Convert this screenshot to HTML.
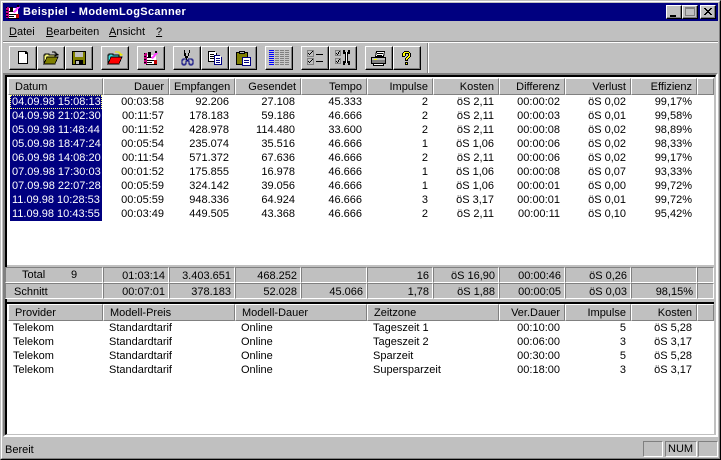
<!DOCTYPE html>
<html><head><meta charset="utf-8"><style>
html,body{margin:0;padding:0;background:#c0c0c0}
body{width:721px;height:460px;position:relative;overflow:hidden;font:11px/14px "Liberation Sans",sans-serif;color:#000}
div,span,svg{position:absolute;box-sizing:border-box}
.b{top:46px;width:28px;height:24px;background:#c0c0c0;border:1px solid;border-color:#fff #000 #000 #fff;box-shadow:inset -1px -1px 0 #808080}
.b svg{left:5px;top:3px}
.m{top:25px;height:14px;white-space:pre}
.m u{text-decoration:underline}
.h{height:17px;background:#c0c0c0;border:1px solid;border-color:#fff #808080 #808080 #fff;line-height:16px;padding:0 4px;white-space:nowrap;text-align:right}
.l{text-align:left}
.r{height:14px;left:0;width:721px}
.r span{top:0;height:14px;text-align:right;white-space:nowrap}
.a{left:103px;width:61px}.c{left:169px;width:60px}.d{left:235px;width:60px}.e{left:301px;width:61px}.f{left:367px;width:61px}.g{left:433px;width:61px}.i{left:499px;width:61px}.j{left:565px;width:61px}.k{left:631px;width:61px}
.s{left:10px;width:92px;background:#000080;color:#fff;padding-left:2px;text-align:left!important}
.t{height:16px;background:#c0c0c0;border:1px solid;border-color:#808080 #fff #fff #808080;line-height:16px;padding:0 3px 0 0;text-align:right;white-space:nowrap}
.p{top:0;text-align:left!important}
.q{left:13px}.u{left:109px}.v{left:241px}.w{left:373px}
.x{left:499px;width:61px}.y{left:565px;width:61px}.z{left:631px;width:61px}
.st{top:441px;height:16px;border:1px solid;border-color:#808080 #fff #fff #808080;line-height:15px}
.cb{top:6px;width:16px;height:14px;background:#c0c0c0;border:1px solid;border-color:#fff #000 #000 #fff;box-shadow:inset -1px -1px 0 #808080}
</style></head><body>

<!-- window frame -->
<div style="left:0;top:0;width:721px;height:460px;border:1px solid;border-color:#c0c0c0 #000 #000 #c0c0c0"></div>
<div style="left:1px;top:1px;width:719px;height:458px;border:1px solid;border-color:#fff #808080 #808080 #fff"></div>

<!-- title bar -->
<div style="left:3px;top:3px;width:715px;height:18px;background:#000080"></div>
<svg style="left:5px;top:4px" width="16" height="16" viewBox="0 0 16 16" shape-rendering="crispEdges">
<rect x="2" y="4" width="11" height="10" fill="#fff"/><rect x="1" y="3" width="3" height="11" fill="#c0007f"/><path d="M1 3h1v1H1zM1 6h2v1H1zM1 9h2v1H1zM1 12h2v1H1z" fill="#000"/>
<path d="M4 7h7v1H4zM4 10h8v1H4zM4 12h5v1H4zM3 14h11v1H3z" fill="#000"/><rect x="5" y="3" width="3" height="4" fill="#000"/><path d="M8 8l5-6 2 1-5 6z" fill="#ff40ff"/><path d="M12 1h2v2h-2z" fill="#000"/><rect x="11" y="10" width="3" height="4" fill="#c00000"/></svg>
<div style="left:23px;top:4px;height:16px;line-height:16px;color:#fff;font-weight:bold;white-space:pre;font-size:11px;letter-spacing:.35px">Beispiel - ModemLogScanner</div>
<div class="cb" style="left:666px;top:5px"><div style="left:3px;top:9px;width:6px;height:2px;background:#000"></div></div>
<div class="cb" style="left:682px;top:5px"><div style="left:2px;top:1px;width:10px;height:9px;border:1px solid #808080;border-top-width:2px"></div></div>
<div class="cb" style="left:700px;top:5px"><svg style="left:3px;top:2px" width="8" height="8" viewBox="0 0 8 8" shape-rendering="crispEdges"><path d="M0 0h2v1h1v1h2V1h1V0h2v1H7v1H6v1H5v1h1v1h1v1h1v1H6V6H5V5H3v1H2v1H0V6h1V5h1V4h1V3H2V2H1V1H0z" fill="#000"/></svg></div>

<!-- menu -->
<div class="m" style="left:9px"><u>D</u>atei</div>
<div class="m" style="left:46px"><u>B</u>earbeiten</div>
<div class="m" style="left:109px"><u>A</u>nsicht</div>
<div class="m" style="left:156px"><u>?</u></div>
<div style="left:3px;top:41px;width:715px;height:1px;background:#808080"></div>
<div style="left:3px;top:42px;width:715px;height:1px;background:#fff"></div>

<!-- toolbar -->
<div class="b" style="left:9px"><svg width="16" height="16" viewBox="0 0 16 16" shape-rendering="crispEdges"><path d="M3 1h8l2 2v11H3z" fill="#000"/><path d="M4 2h6v2h2v9H4z" fill="#fff"/></svg></div>
<div class="b" style="left:37px"><svg width="16" height="16" viewBox="0 0 16 16" shape-rendering="crispEdges"><path d="M1 14V5h1V4h4v1h6v2H5L1 14z" fill="#ffff80" stroke="#000" stroke-width=".8"/><path d="M1 14l3-7h11l-3 7z" fill="#808000" stroke="#000" stroke-width=".8"/><path d="M9 2h3v1h1v1h1v1h1v-1M13 3v3" stroke="#000" stroke-width="1" fill="none"/></svg></div>
<div class="b" style="left:65px"><svg width="16" height="16" viewBox="0 0 16 16" shape-rendering="crispEdges"><rect x="1" y="1" width="14" height="14" fill="#000"/><rect x="2" y="2" width="12" height="12" fill="#808000"/><rect x="4" y="2" width="8" height="5" fill="#c0c0c0"/><rect x="4" y="10" width="8" height="5" fill="#000"/><rect x="5" y="11" width="3" height="3" fill="#c0c0c0"/></svg></div>
<div class="b" style="left:101px"><svg width="16" height="16" viewBox="0 0 16 16" shape-rendering="crispEdges"><path d="M1 14V5h1V4h4v1h6v2H5L1 14z" fill="#40e0e0" stroke="#000" stroke-width=".8"/><path d="M1 14l3-7h11l-3 7z" fill="#ff0000" stroke="#000" stroke-width=".8"/><path d="M8 2h4v1h1v1h1v1h1V4M13 3v3" stroke="#e8e800" stroke-width="1" fill="none"/></svg></div>
<div class="b" style="left:137px"><svg width="16" height="16" viewBox="0 0 16 16" shape-rendering="crispEdges"><rect x="2" y="5" width="11" height="9" fill="#fff"/><rect x="1" y="3" width="3" height="11" fill="#c0007f"/><path d="M1 3h1v1H1zM1 6h2v1H1zM1 9h2v1H1zM1 12h2v1H1z" fill="#000"/><path d="M4 7h7v1H4zM4 10h8v1H4zM4 12h5v1H4zM3 14h11v1H3z" fill="#000"/><rect x="5" y="2" width="3" height="5" fill="#000"/><path d="M8 8l5-6 2 1-5 6z" fill="#ff40ff"/><path d="M12 1h2v2h-2z" fill="#000"/><rect x="11" y="10" width="3" height="4" fill="#c00000"/></svg></div>
<div class="b" style="left:173px"><svg width="16" height="16" viewBox="0 0 16 16" shape-rendering="crispEdges"><path d="M5 0h1v3h1v3h2V3h1V0h1v3h-1v3h-1v2h-1v2H7V8H6V6H5V3z" fill="#000"/><path d="M7 9H4v1H3v4h1v1h2v-1h1v-3h1v-1h1v1h1v3h1v1h2v-1h1v-4h-1V9H9" fill="none" stroke="#000080"/></svg></div>
<div class="b" style="left:201px"><svg width="16" height="16" viewBox="0 0 16 16" shape-rendering="crispEdges"><path d="M1 1h7v1h1v1h1v9H1z" fill="#000"/><rect x="2" y="2" width="7" height="9" fill="#fff"/><path d="M3 4h4v1H3zM3 6h4v1H3zM3 8h4v1H3z" fill="#000"/><path d="M7 5h6v1h1v1h1v8H7z" fill="#000080"/><rect x="8" y="6" width="6" height="8" fill="#fff"/><path d="M9 8h4v1H9zM9 10h4v1H9zM9 12h4v1H9z" fill="#000080"/></svg></div>
<div class="b" style="left:229px"><svg width="16" height="16" viewBox="0 0 16 16" shape-rendering="crispEdges"><rect x="1" y="2" width="12" height="13" fill="#000"/><rect x="2" y="3" width="10" height="11" fill="#808000"/><rect x="4" y="1" width="6" height="3" fill="#000"/><rect x="5" y="2" width="4" height="1" fill="#c0c0c0"/><rect x="7" y="7" width="9" height="9" fill="#000080"/><rect x="8" y="8" width="7" height="7" fill="#fff"/><path d="M9 10h5v1H9zM9 12h5v1H9z" fill="#000080"/></svg></div>
<div class="b" style="left:265px;background:#c8c8c8"><svg style="left:3px;top:3px" width="20" height="17" viewBox="0 0 20 17" shape-rendering="crispEdges"><path d="M0 0h5v1H0zM0 2h5v1H0zM0 4h5v1H0zM0 6h5v1H0zM0 8h5v1H0zM0 10h5v1H0zM0 12h5v1H0zM0 14h5v1H0z" fill="#0000ff"/><path d="M6 0h14v1H6zM6 2h14v1H6zM6 4h14v1H6zM6 6h14v1H6zM6 8h14v1H6zM6 10h14v1H6zM6 12h14v1H6zM6 14h14v1H6z" fill="#808080"/><path d="M10 0h1v16h-1zM15 0h1v16h-1z" fill="#c8c8c8"/></svg></div>
<div class="b" style="left:301px"><svg width="17" height="16" viewBox="0 0 17 16" shape-rendering="crispEdges"><path d="M0 0h7v7H0zM0 8h7v7H0z" fill="#808080"/><path d="M1 1h5v5H1zM1 9h5v5H1z" fill="#c0c0c0"/><path d="M1 3h1v1h1V3h1V2h1V1h1v1H5v1H4v1H3v1H2V4H1zM1 11h1v1h1v-1h1v-1h1V9h1v1H5v1H4v1H3v1H2v-1H1z" fill="#000"/><path d="M9 4h7v1H9zM9 11h7v1H9z" fill="#000"/></svg></div>
<div class="b" style="left:329px"><svg width="17" height="16" viewBox="0 0 17 16" shape-rendering="crispEdges"><path d="M0 0h6v6H0zM0 8h6v6H0z" fill="#808080"/><path d="M1 1h4v4H1zM1 9h4v4H1z" fill="#c0c0c0"/><path d="M1 3h1v1h1V2h1V1h1v1H4v2H3v1H2V4H1zM1 11h1v1h1v-2h1V9h1v1H4v2H3v1H2v-1H1z" fill="#000"/><path d="M8 0h2v2h3V0h2v4h-2v7h2v4h-2v-2h-3v2H8v-4h2V4H8z" fill="#000"/><path d="M11 2h1v11h-1zM9 1h0M9 12h0" fill="#fff"/></svg></div>
<div class="b" style="left:365px"><svg width="16" height="16" viewBox="0 0 16 16" shape-rendering="crispEdges"><path d="M5 1h9l-1 6H4z" fill="#000"/><path d="M6 2h7l-1 4H5z" fill="#fff"/><path d="M6 3h6v1H6zM6 5h5v1H6z" fill="#000"/><rect x="0" y="7" width="15" height="7" fill="#000"/><rect x="1" y="8" width="13" height="2" fill="#c0c0c0"/><rect x="1" y="10" width="13" height="3" fill="#808080"/><rect x="3" y="9" width="3" height="1" fill="#ffff00"/><rect x="2" y="14" width="11" height="2" fill="#000"/><rect x="3" y="14" width="9" height="1" fill="#fff"/></svg></div>
<div class="b" style="left:393px"><svg width="16" height="16" viewBox="0 0 16 16" shape-rendering="crispEdges"><path d="M3 3h1V2h1V1h5v1h1v1h1v4h-1v1h-1v1H9v2H6V8h1V7h1V6h1V4H7v2H6v1H3zM6 12h3v3H6z" fill="#000"/><path d="M4 3h1V2h5v1h1v4h-1v1H9v1H8v1H7V8h1V7h1V6h1V3H6v3H4zM7 13h1v1H7z" fill="#ffff00"/></svg></div>
<div style="left:427px;top:43px;width:1px;height:30px;background:#808080"></div>
<div style="left:428px;top:43px;width:1px;height:30px;background:#fff"></div>

<!-- main sunken frame -->
<div style="left:3px;top:73px;width:715px;height:364px;border:2px solid;border-color:#808080 #fff #fff #808080"></div>
<div style="left:5px;top:75px;width:711px;height:360px;border-style:solid;border-color:#000 #c0c0c0 #c0c0c0 #000;border-width:2px 1px 1px 2px"></div>

<!-- top list -->
<div style="left:7px;top:77px;width:707px;height:188px;background:#fff"></div>
<div class="h l" style="left:8px;top:78px;width:95px;padding-left:6px">Datum</div>
<div class="h" style="left:103px;top:78px;width:66px">Dauer</div>
<div class="h" style="left:169px;top:78px;width:66px">Empfangen</div>
<div class="h" style="left:235px;top:78px;width:66px">Gesendet</div>
<div class="h" style="left:301px;top:78px;width:66px">Tempo</div>
<div class="h" style="left:367px;top:78px;width:66px">Impulse</div>
<div class="h" style="left:433px;top:78px;width:66px">Kosten</div>
<div class="h" style="left:499px;top:78px;width:66px">Differenz</div>
<div class="h" style="left:565px;top:78px;width:66px">Verlust</div>
<div class="h" style="left:631px;top:78px;width:66px">Effizienz</div>
<div class="h" style="left:697px;top:78px;width:17px"></div>

<div class="r" style="top:95px"><span class="s" style="outline:1px dotted #ffff80;outline-offset:-1px">04.09.98 15:08:13</span><span class="a">00:03:58</span><span class="c">92.206</span><span class="d">27.108</span><span class="e">45.333</span><span class="f">2</span><span class="g">öS 2,11</span><span class="i">00:00:02</span><span class="j">öS 0,02</span><span class="k">99,17%</span></div>
<div class="r" style="top:109px"><span class="s">04.09.98 21:02:30</span><span class="a">00:11:57</span><span class="c">178.183</span><span class="d">59.186</span><span class="e">46.666</span><span class="f">2</span><span class="g">öS 2,11</span><span class="i">00:00:03</span><span class="j">öS 0,01</span><span class="k">99,58%</span></div>
<div class="r" style="top:123px"><span class="s">05.09.98 11:48:44</span><span class="a">00:11:52</span><span class="c">428.978</span><span class="d">114.480</span><span class="e">33.600</span><span class="f">2</span><span class="g">öS 2,11</span><span class="i">00:00:08</span><span class="j">öS 0,02</span><span class="k">98,89%</span></div>
<div class="r" style="top:137px"><span class="s">05.09.98 18:47:24</span><span class="a">00:05:54</span><span class="c">235.074</span><span class="d">35.516</span><span class="e">46.666</span><span class="f">1</span><span class="g">öS 1,06</span><span class="i">00:00:06</span><span class="j">öS 0,02</span><span class="k">98,33%</span></div>
<div class="r" style="top:151px"><span class="s">06.09.98 14:08:20</span><span class="a">00:11:54</span><span class="c">571.372</span><span class="d">67.636</span><span class="e">46.666</span><span class="f">2</span><span class="g">öS 2,11</span><span class="i">00:00:06</span><span class="j">öS 0,02</span><span class="k">99,17%</span></div>
<div class="r" style="top:165px"><span class="s">07.09.98 17:30:03</span><span class="a">00:01:52</span><span class="c">175.855</span><span class="d">16.978</span><span class="e">46.666</span><span class="f">1</span><span class="g">öS 1,06</span><span class="i">00:00:08</span><span class="j">öS 0,07</span><span class="k">93,33%</span></div>
<div class="r" style="top:179px"><span class="s">07.09.98 22:07:28</span><span class="a">00:05:59</span><span class="c">324.142</span><span class="d">39.056</span><span class="e">46.666</span><span class="f">1</span><span class="g">öS 1,06</span><span class="i">00:00:01</span><span class="j">öS 0,00</span><span class="k">99,72%</span></div>
<div class="r" style="top:193px"><span class="s">11.09.98 10:28:53</span><span class="a">00:05:59</span><span class="c">948.336</span><span class="d">64.924</span><span class="e">46.666</span><span class="f">3</span><span class="g">öS 3,17</span><span class="i">00:00:01</span><span class="j">öS 0,01</span><span class="k">99,72%</span></div>
<div class="r" style="top:207px"><span class="s">11.09.98 10:43:55</span><span class="a">00:03:49</span><span class="c">449.505</span><span class="d">43.368</span><span class="e">46.666</span><span class="f">2</span><span class="g">öS 2,11</span><span class="i">00:00:11</span><span class="j">öS 0,10</span><span class="k">95,42%</span></div>

<!-- totals -->
<div style="left:7px;top:265px;width:709px;height:37px;background:#c0c0c0"></div>
<div class="t" style="left:5px;top:267px;width:98px"></div>
<div style="left:22px;top:267px;line-height:17px">Total</div><div style="left:71px;top:267px;line-height:17px">9</div>
<div class="t" style="left:103px;top:267px;width:66px">01:03:14</div>
<div class="t" style="left:169px;top:267px;width:66px">3.403.651</div>
<div class="t" style="left:235px;top:267px;width:66px">468.252</div>
<div class="t" style="left:301px;top:267px;width:66px"></div>
<div class="t" style="left:367px;top:267px;width:66px">16</div>
<div class="t" style="left:433px;top:267px;width:66px">öS 16,90</div>
<div class="t" style="left:499px;top:267px;width:66px">00:00:46</div>
<div class="t" style="left:565px;top:267px;width:66px">öS 0,26</div>
<div class="t" style="left:631px;top:267px;width:66px"></div>
<div class="t" style="left:697px;top:267px;width:17px"></div>

<div class="t" style="left:5px;top:283px;width:98px;text-align:left;padding-left:8px">Schnitt</div>
<div class="t" style="left:103px;top:283px;width:66px">00:07:01</div>
<div class="t" style="left:169px;top:283px;width:66px">378.183</div>
<div class="t" style="left:235px;top:283px;width:66px">52.028</div>
<div class="t" style="left:301px;top:283px;width:66px">45.066</div>
<div class="t" style="left:367px;top:283px;width:66px">1,78</div>
<div class="t" style="left:433px;top:283px;width:66px">öS 1,88</div>
<div class="t" style="left:499px;top:283px;width:66px">00:00:05</div>
<div class="t" style="left:565px;top:283px;width:66px">öS 0,03</div>
<div class="t" style="left:631px;top:283px;width:66px">98,15%</div>
<div class="t" style="left:697px;top:283px;width:17px"></div>

<!-- bottom list -->
<div style="left:7px;top:302px;width:707px;height:132px;background:#fff;border-style:solid;border-color:#000;border-width:2px 0 0 0"></div>
<div class="h l" style="left:8px;top:304px;width:95px;padding-left:6px">Provider</div>
<div class="h l" style="left:103px;top:304px;width:132px;padding-left:6px">Modell-Preis</div>
<div class="h l" style="left:235px;top:304px;width:132px;padding-left:6px">Modell-Dauer</div>
<div class="h l" style="left:367px;top:304px;width:132px;padding-left:6px">Zeitzone</div>
<div class="h" style="left:499px;top:304px;width:66px">Ver.Dauer</div>
<div class="h" style="left:565px;top:304px;width:66px">Impulse</div>
<div class="h" style="left:631px;top:304px;width:66px">Kosten</div>
<div class="h" style="left:697px;top:304px;width:17px"></div>

<div class="r" style="top:321px"><span class="p q">Telekom</span><span class="p u">Standardtarif</span><span class="p v">Online</span><span class="p w">Tageszeit 1</span><span class="x">00:10:00</span><span class="y">5</span><span class="z">öS 5,28</span></div>
<div class="r" style="top:335px"><span class="p q">Telekom</span><span class="p u">Standardtarif</span><span class="p v">Online</span><span class="p w">Tageszeit 2</span><span class="x">00:06:00</span><span class="y">3</span><span class="z">öS 3,17</span></div>
<div class="r" style="top:349px"><span class="p q">Telekom</span><span class="p u">Standardtarif</span><span class="p v">Online</span><span class="p w">Sparzeit</span><span class="x">00:30:00</span><span class="y">5</span><span class="z">öS 5,28</span></div>
<div class="r" style="top:363px"><span class="p q">Telekom</span><span class="p u">Standardtarif</span><span class="p v">Online</span><span class="p w">Supersparzeit</span><span class="x">00:18:00</span><span class="y">3</span><span class="z">öS 3,17</span></div>

<!-- status -->
<div style="left:5px;top:443px;line-height:14px">Bereit</div>
<div class="st" style="left:643px;width:20px"></div>
<div class="st" style="left:665px;width:32px;padding-left:2px">NUM</div>
<div class="st" style="left:698px;width:20px"></div>
</body></html>
